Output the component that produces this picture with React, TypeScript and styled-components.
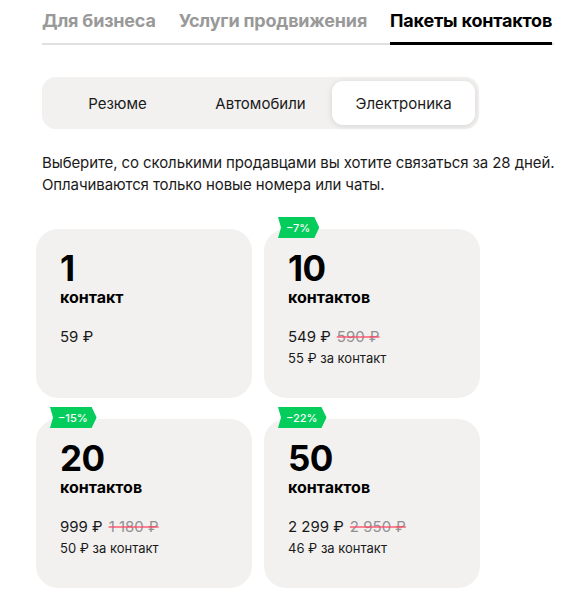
import styled, { createGlobalStyle } from 'styled-components';

const GlobalStyle = createGlobalStyle`
  html, body {
    margin: 0;
    padding: 0;
    background: #ffffff;
    font-family: Inter, "Noto Sans", Roboto, sans-serif;
    color: #000;
  }
`;

const Page = styled.div`
  width: 580px;
  padding: 9px 0 0 42px;
  box-sizing: border-box;
`;

const Tabs = styled.nav`
  display: flex;
  width: 512px;
  border-bottom: 2px solid #e0e0e0;
`;

const Tab = styled.div<{ $active?: boolean }>`
  font-size: 18px;
  font-weight: 700;
  line-height: 24px;
  letter-spacing: -0.2px;
  color: ${(p) => (p.$active ? '#000' : '#999999')};
  padding-bottom: 9px;
  margin-right: 23px;
  margin-bottom: -2px;
  border-bottom: 3px solid ${(p) => (p.$active ? '#000' : 'transparent')};
  &:last-child {
    margin-right: 0;
  }
`;

const Segmented = styled.div`
  display: grid;
  grid-template-columns: repeat(3, 1fr);
  width: 437px;
  box-sizing: border-box;
  margin-top: 32px;
  padding: 4px;
  background: #f2f1f0;
  border-radius: 14px;
`;

const Segment = styled.div<{ $active?: boolean }>`
  height: 44px;
  display: flex;
  align-items: center;
  justify-content: center;
  font-size: 15px;
  color: #1a1a1a;
  border-radius: 11px;
  background: ${(p) => (p.$active ? '#fff' : 'transparent')};
  box-shadow: ${(p) => (p.$active ? '0 1px 6px rgba(0,0,0,0.12)' : 'none')};
`;

const Description = styled.p`
  margin: 23px 0 0;
  font-size: 15px;
  line-height: 22px;
  color: #1a1a1a;
  letter-spacing: -0.1px;
`;

const Grid = styled.div`
  display: grid;
  grid-template-columns: 216px 216px;
  column-gap: 12px;
  row-gap: 21px;
  margin: 33px 0 0 -6px;
`;

const Card = styled.div`
  position: relative;
  height: 169px;
  box-sizing: border-box;
  padding: 21px 24px;
  background: #f2f1f0;
  border-radius: 22px;
  display: flex;
  flex-direction: column;
`;

const Badge = styled.div`
  position: absolute;
  top: -12px;
  left: 14px;
  height: 21px;
  padding: 0 9px 0 8px;
  display: flex;
  align-items: center;
  font-size: 11px;
  font-weight: 500;
  color: #fff;
  background: #04cd5c;
  clip-path: polygon(0 0, calc(100% - 5px) 0, 100% 50%, calc(100% - 5px) 100%, 0 100%, 3px 50%);
`;

const Amount = styled.div`
  font-size: 35px;
  font-weight: 700;
  line-height: 36px;
  letter-spacing: -0.5px;
`;

const Unit = styled.div`
  font-size: 16px;
  font-weight: 700;
  line-height: 20px;
  margin-top: 1px;
`;

const PriceRow = styled.div`
  display: flex;
  gap: 6px;
  margin-top: 20px;
  font-size: 15px;
  line-height: 20px;
  color: #1a1a1a;
`;

const OldPrice = styled.span`
  color: #909090;
  text-decoration: line-through;
  text-decoration-color: rgba(255, 70, 100, 0.65);
  text-decoration-thickness: 2px;
`;

const PerContact = styled.div`
  font-size: 13px;
  line-height: 18px;
  margin-top: 2px;
  color: #1a1a1a;
`;

type Pack = {
  amount: string;
  unit: string;
  price: string;
  old?: string;
  per?: string;
  badge?: string;
};

const packs: Pack[] = [
  { amount: '1', unit: 'контакт', price: '59 ₽' },
  { amount: '10', unit: 'контактов', price: '549 ₽', old: '590 ₽', per: '55 ₽ за контакт', badge: '−7%' },
  { amount: '20', unit: 'контактов', price: '999 ₽', old: '1 180 ₽', per: '50 ₽ за контакт', badge: '−15%' },
  { amount: '50', unit: 'контактов', price: '2 299 ₽', old: '2 950 ₽', per: '46 ₽ за контакт', badge: '−22%' },
];

export default function App() {
  return (
    <>
      <GlobalStyle />
      <Page>
        <Tabs>
          <Tab>Для бизнеса</Tab>
          <Tab>Услуги продвижения</Tab>
          <Tab $active>Пакеты контактов</Tab>
        </Tabs>

        <Segmented>
          <Segment>Резюме</Segment>
          <Segment>Автомобили</Segment>
          <Segment $active>Электроника</Segment>
        </Segmented>

        <Description>
          Выберите, со сколькими продавцами вы хотите связаться за 28 дней.
          <br />
          Оплачиваются только новые номера или чаты.
        </Description>

        <Grid>
          {packs.map((p) => (
            <Card key={p.amount}>
              {p.badge && <Badge>{p.badge}</Badge>}
              <Amount>{p.amount}</Amount>
              <Unit>{p.unit}</Unit>
              <PriceRow>
                <span>{p.price}</span>
                {p.old && <OldPrice>{p.old}</OldPrice>}
              </PriceRow>
              {p.per && <PerContact>{p.per}</PerContact>}
            </Card>
          ))}
        </Grid>
      </Page>
    </>
  );
}
